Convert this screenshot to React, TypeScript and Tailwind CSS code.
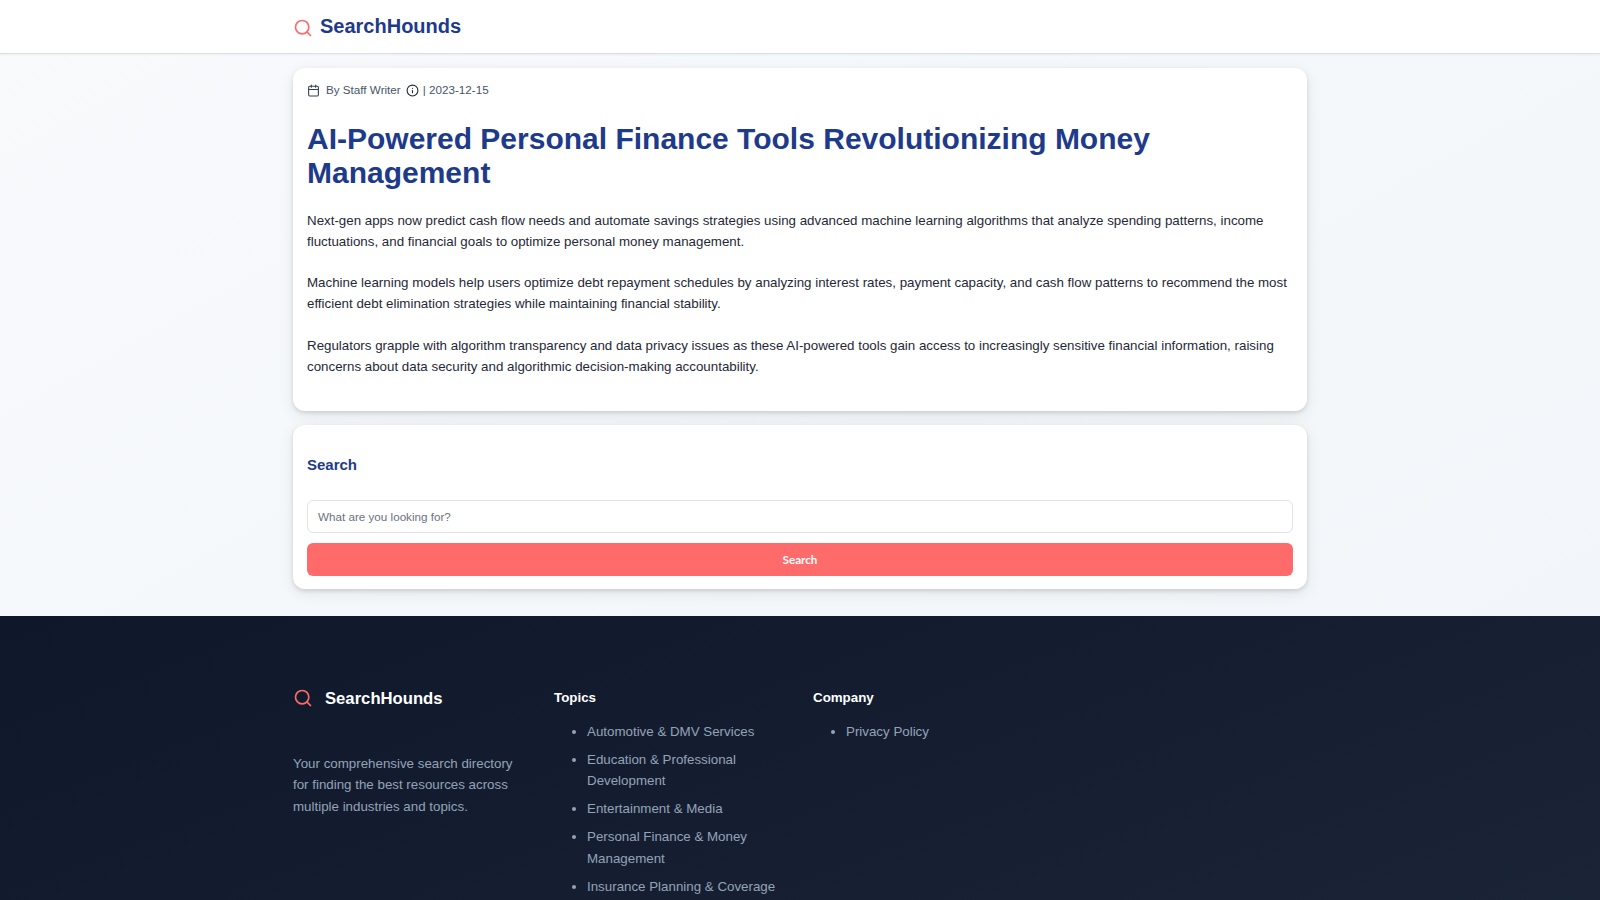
import { Calendar, Info, Search } from "lucide-react"

const sans = "font-['Liberation_Sans',Arial,sans-serif]"

const paragraphs = [
  "Next-gen apps now predict cash flow needs and automate savings strategies using advanced machine learning algorithms that analyze spending patterns, income fluctuations, and financial goals to optimize personal money management.",
  "Machine learning models help users optimize debt repayment schedules by analyzing interest rates, payment capacity, and cash flow patterns to recommend the most efficient debt elimination strategies while maintaining financial stability.",
  "Regulators grapple with algorithm transparency and data privacy issues as these AI-powered tools gain access to increasingly sensitive financial information, raising concerns about data security and algorithmic decision-making accountability.",
]

const topics = [
  "Automotive & DMV Services",
  "Education & Professional Development",
  "Entertainment & Media",
  "Personal Finance & Money Management",
  "Insurance Planning & Coverage",
]

export default function App() {
  return (
    <div className={`${sans} h-screen overflow-hidden bg-gradient-to-br from-[#f8fafc] to-[#f1f5f9]`}>
      {/* Header */}
      <header className="h-[54px] bg-white border-b border-[#d9dee7] shadow-[0_1px_2px_rgba(0,0,0,0.05)]">
        <div className="w-[1014px] mx-auto h-full flex items-center gap-[7px]">
          <Search className="w-[20px] h-[20px] text-[#ff6b6b] mt-[2px]" strokeWidth={2} />
          <span className="text-[20px] font-bold text-[#1e3a8a] mb-[1px]">SearchHounds</span>
        </div>
      </header>

      <main className="w-[1014px] mx-auto pt-[14px] pb-[27px] flex flex-col gap-[13.33px]">
        {/* Article */}
        <article className="bg-white rounded-xl shadow-[0_2px_4px_rgba(0,0,0,0.12),0_4px_16px_rgba(0,0,0,0.08)] px-[14px] pt-[14px] pb-[34px]">
          <div className="flex items-center text-[11.67px] text-[#475569] h-[16px]">
            <Calendar className="w-[13px] h-[13px] text-[#334155] mr-[6px]" />
            <span>By Staff Writer</span>
            <Info className="w-[13px] h-[13px] text-[#1f2937] ml-[5px] mr-[4px]" />
            <span>| 2023-12-15</span>
          </div>
          <h1 className="mt-[24px] text-[30px] leading-[33.75px] font-bold text-[#1e3a8a]">
            AI-Powered Personal Finance Tools Revolutionizing Money Management
          </h1>
          <div className="mt-[20px] flex flex-col gap-[20px] text-[13.33px] leading-[21.33px] text-[#1f2937]">
            {paragraphs.map((p) => (
              <p key={p.slice(0, 12)}>{p}</p>
            ))}
          </div>
        </article>

        {/* Search */}
        <section className="bg-white rounded-xl shadow-[0_2px_4px_rgba(0,0,0,0.12),0_4px_16px_rgba(0,0,0,0.08)] px-[14px] pt-[31px] pb-[13.33px]">
          <h2 className="text-[15px] leading-[18px] font-bold text-[#1e3a8a]">Search</h2>
          <input
            placeholder="What are you looking for?"
            className="mt-[26px] w-full h-[33px] px-[10px] border border-[#dfe3ea] rounded-md bg-white text-[11.67px] placeholder:text-[#6b7280] outline-none"
          />
          <button className="mt-[10px] w-full h-[33px] rounded-md bg-[#ff6b6b] text-white text-[11.67px] font-bold font-['Lato',sans-serif]">
            Search
          </button>
        </section>
      </main>

      {/* Footer */}
      <footer className="bg-gradient-to-br from-[#0f172a] to-[#1e293b] h-[600px] pt-[72px]">
        <div className="w-[1014px] mx-auto grid grid-cols-[237px_235px_1fr_1fr] gap-[24px]">
          <div>
            <div className="flex items-center gap-[12px] h-[20px]">
              <Search className="w-[20px] h-[20px] text-[#ff6b6b]" strokeWidth={2} />
              <span className="text-[16.67px] font-bold text-white">SearchHounds</span>
            </div>
            <p className="mt-[45px] text-[13.33px] leading-[21.33px] text-[#94a3b8]">
              Your comprehensive search directory for finding the best resources across multiple industries and topics.
            </p>
          </div>
          <div>
            <h3 className="text-[13.33px] leading-[20px] font-bold text-white">Topics</h3>
            <ul className="mt-[13px] list-disc pl-[33px] text-[13.33px] leading-[21.33px] text-[#94a3b8] flex flex-col gap-[6.67px] marker:text-[#94a3b8]">
              {topics.map((t) => (
                <li key={t}>{t}</li>
              ))}
            </ul>
          </div>
          <div>
            <h3 className="text-[13.33px] leading-[20px] font-bold text-white">Company</h3>
            <ul className="mt-[13px] list-disc pl-[33px] text-[13.33px] leading-[21.33px] text-[#94a3b8]">
              <li>Privacy Policy</li>
            </ul>
          </div>
        </div>
      </footer>
    </div>
  )
}
